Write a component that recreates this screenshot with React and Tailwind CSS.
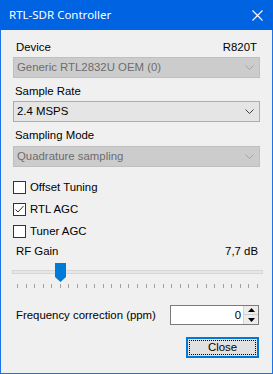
import React from "react";

const font = { fontFamily: '"Liberation Sans", Arial, sans-serif' };

function Chevron({ color }) {
  return (
    <svg width="9" height="5" viewBox="0 0 9 5" className="shrink-0">
      <path d="M0.5 0.5 L4.5 4.5 L8.5 0.5" fill="none" stroke={color} strokeWidth="1" />
    </svg>
  );
}

function Combo({ value, disabled }) {
  return (
    <div
      className={
        "h-[21px] w-[247px] flex items-center justify-between pl-[3px] pr-[5px] border " +
        (disabled
          ? "bg-[#cccccc] border-[#bfbfbf] text-[#6d6d6d]"
          : "bg-[#e5e5e5] border-[#adadad] text-black")
      }
    >
      <span className="text-[11.4px] leading-[13px]">{value}</span>
      <Chevron color={disabled ? "#a3a3a3" : "#404040"} />
    </div>
  );
}

function Check({ label, checked }) {
  return (
    <div className="flex items-center h-[13px]">
      <div className="w-[13px] h-[13px] border border-[#333333] bg-white flex items-center justify-center">
        {checked && (
          <svg width="11" height="11" viewBox="0 0 11 11">
            <path d="M1.5 5.5 L4 8 L9.5 2" fill="none" stroke="#333333" strokeWidth="1" />
          </svg>
        )}
      </div>
      <span className="ml-[4px] text-[11.4px] leading-[13px] text-black">{label}</span>
    </div>
  );
}

export default function App() {
  const ticks = Array.from({ length: 29 }, (_, i) => i);
  return (
    <div style={font} className="w-[273px] h-[374px] flex flex-col bg-[#1a73e8]">
      {/* Title bar */}
      <div className="h-[30px] bg-[#0063e1] flex items-center justify-between pl-[9px] pr-[10px] shrink-0">
        <span
          className="text-white text-[11.5px]"
          style={{ fontFamily: '"Noto Sans", "Open Sans", sans-serif' }}
        >
          RTL-SDR Controller
        </span>
        <svg width="11" height="11" viewBox="0 0 11 11">
          <path d="M0.5 0.5 L10.5 10.5 M10.5 0.5 L0.5 10.5" stroke="white" strokeWidth="1.1" />
        </svg>
      </div>

      {/* Body */}
      <div className="mx-[1px] mb-[1px] flex-1 bg-[#f0f0f0] pl-[12px] pr-[12px] flex flex-col">
        <div className="mt-[11px] flex justify-between pl-[3px] pr-[3px] text-[11.4px] leading-[13px] text-black">
          <span>Device</span>
          <span>R820T</span>
        </div>
        <div className="mt-[3px]">
          <Combo value="Generic RTL2832U OEM (0)" disabled />
        </div>

        <div className="mt-[7px] pl-[2px] text-[11.4px] leading-[13px] text-black">Sample Rate</div>
        <div className="mt-[3px]">
          <Combo value="2.4 MSPS" />
        </div>

        <div className="mt-[7px] pl-[2px] text-[11.4px] leading-[13px] text-black">Sampling Mode</div>
        <div className="mt-[4px]">
          <Combo value="Quadrature sampling" disabled />
        </div>

        <div className="mt-[14px] flex flex-col gap-[9px]">
          <Check label="Offset Tuning" />
          <Check label="RTL AGC" checked />
          <Check label="Tuner AGC" />
        </div>

        <div className="mt-[7px] flex justify-between pl-[3px] pr-[2px] text-[11.4px] leading-[13px] text-black">
          <span>RF Gain</span>
          <span>7,7 dB</span>
        </div>

        {/* Trackbar */}
        <div className="relative mt-[4px] h-[26px] w-[251px] -ml-[1px]">
          <div className="absolute left-0 right-0 top-[8px] h-[4px] bg-[#e7e7e7] border border-[#d6d6d6]" />
          <svg className="absolute left-[43px] top-[1px]" width="11" height="19" viewBox="0 0 11 19">
            <path d="M0 0 H11 V14 L5.5 19 L0 14 Z" fill="#007ad9" />
          </svg>
          {ticks.map((i) => (
            <div
              key={i}
              className="absolute top-[22px] w-[1px] h-[4px] bg-[#a0a0a0]"
              style={{ left: 5 + Math.round((i * 240) / 28) }}
            />
          ))}
        </div>

        {/* Frequency correction */}
        <div className="mt-[17px] flex items-center justify-between">
          <span className="pl-[3px] text-[11.4px] leading-[13px] text-black">Frequency correction (ppm)</span>
          <div className="w-[89px] h-[20px] bg-white border border-[#7a7a7a] flex items-center justify-end mr-[1px]">
            <span className="text-[11.4px] leading-[13px] text-black mr-[2px]">0</span>
            <div className="w-[15px] h-[18px] flex flex-col border-l border-[#d4d4d4]">
              <div className="h-[9px] bg-[#ececec] border-b border-[#cfcfcf] flex items-center justify-center">
                <svg width="7" height="4" viewBox="0 0 7 4">
                  <path d="M0 4 L3.5 0 L7 4 Z" fill="#000" />
                </svg>
              </div>
              <div className="h-[9px] bg-[#ececec] flex items-center justify-center">
                <svg width="7" height="4" viewBox="0 0 7 4">
                  <path d="M0 0 L3.5 4 L7 0 Z" fill="#000" />
                </svg>
              </div>
            </div>
          </div>
        </div>

        {/* Close */}
        <div className="mt-[12px] flex justify-end mr-[1px]">
          <button className="w-[73px] h-[21px] border-2 border-[#0078d7] bg-[#e1e1e1] p-[1px]">
            <div className="w-full h-full border border-dotted border-black flex items-center justify-center text-[11.4px] leading-[13px] text-black">
              Close
            </div>
          </button>
        </div>
      </div>
    </div>
  );
}
